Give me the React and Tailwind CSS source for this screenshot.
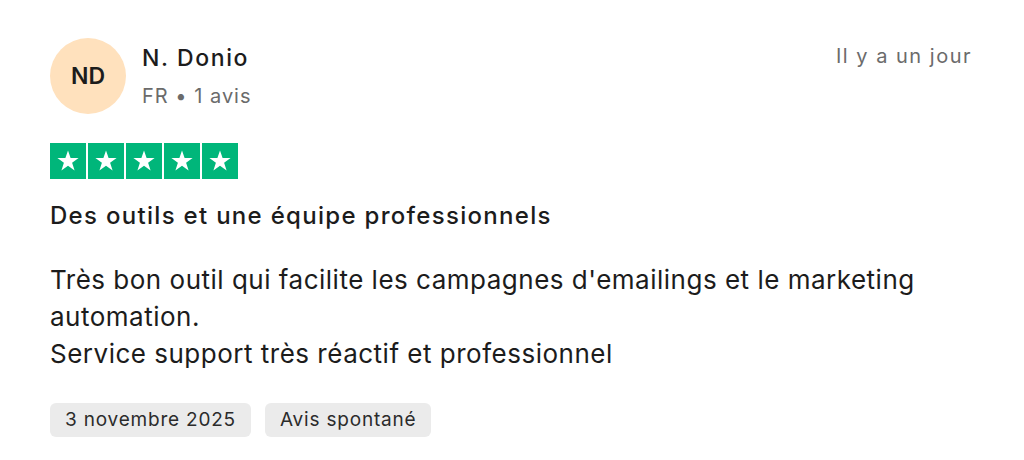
import React from 'react'

function Star() {
  return (
    <div className="w-[36px] h-[36px] bg-[#00b67a] flex items-center justify-center">
      <svg width="24" height="24" viewBox="0 0 24 24">
        <path
          d="M12 1.5l2.6 7.6h8l-6.5 4.7 2.5 7.7L12 16.7l-6.6 4.8 2.5-7.7L1.4 9.1h8z"
          fill="#fff"
        />
      </svg>
    </div>
  )
}

function Tag({ children }) {
  return (
    <span className="h-[34px] px-[15px] rounded-[6px] bg-[#ebebeb] text-[19px] tracking-[0.8px] text-[#2b2b2b] flex items-center">
      {children}
    </span>
  )
}

export default function App() {
  return (
    <div
      className="w-[1024px] h-[460px] bg-white pl-[50px] pr-[52px] pt-[38px] text-[#1c1c1c]"
      style={{ fontFamily: 'Inter, "Noto Sans", sans-serif' }}
    >
      {/* Header */}
      <div className="flex items-start justify-between">
        <div className="flex items-center gap-[16px]">
          <div className="w-[76px] h-[76px] rounded-full bg-[#ffe1bd] flex items-center justify-center text-[23px] font-semibold">
            ND
          </div>
          <div className="flex flex-col">
            <span className="text-[23px] font-medium tracking-[1.6px] leading-[30px]">N. Donio</span>
            <span className="text-[20px] tracking-[1px] text-[#6b6b6b] leading-[26px] mt-[10px]">FR • 1 avis</span>
          </div>
        </div>
        <span className="text-[20px] tracking-[1.5px] text-[#6b6b6b] mt-[3px]">Il y a un jour</span>
      </div>

      {/* Stars */}
      <div className="flex gap-[2px] mt-[29px]">
        <Star />
        <Star />
        <Star />
        <Star />
        <Star />
      </div>

      {/* Title */}
      <h3 className="text-[24px] font-medium tracking-[1.3px] mt-[22px] leading-[30px]">
        Des outils et une équipe professionnels
      </h3>

      {/* Body */}
      <p className="text-[26px] tracking-[0.5px] leading-[37px] mt-[30px] text-[#1c1c1c]">
        Très bon outil qui facilite les campagnes d'emailings et le marketing
        <br />
        automation.
        <br />
        Service support très réactif et professionnel
      </p>

      {/* Tags */}
      <div className="flex gap-[14px] mt-[31px]">
        <Tag>3 novembre 2025</Tag>
        <Tag>Avis spontané</Tag>
      </div>
    </div>
  )
}
